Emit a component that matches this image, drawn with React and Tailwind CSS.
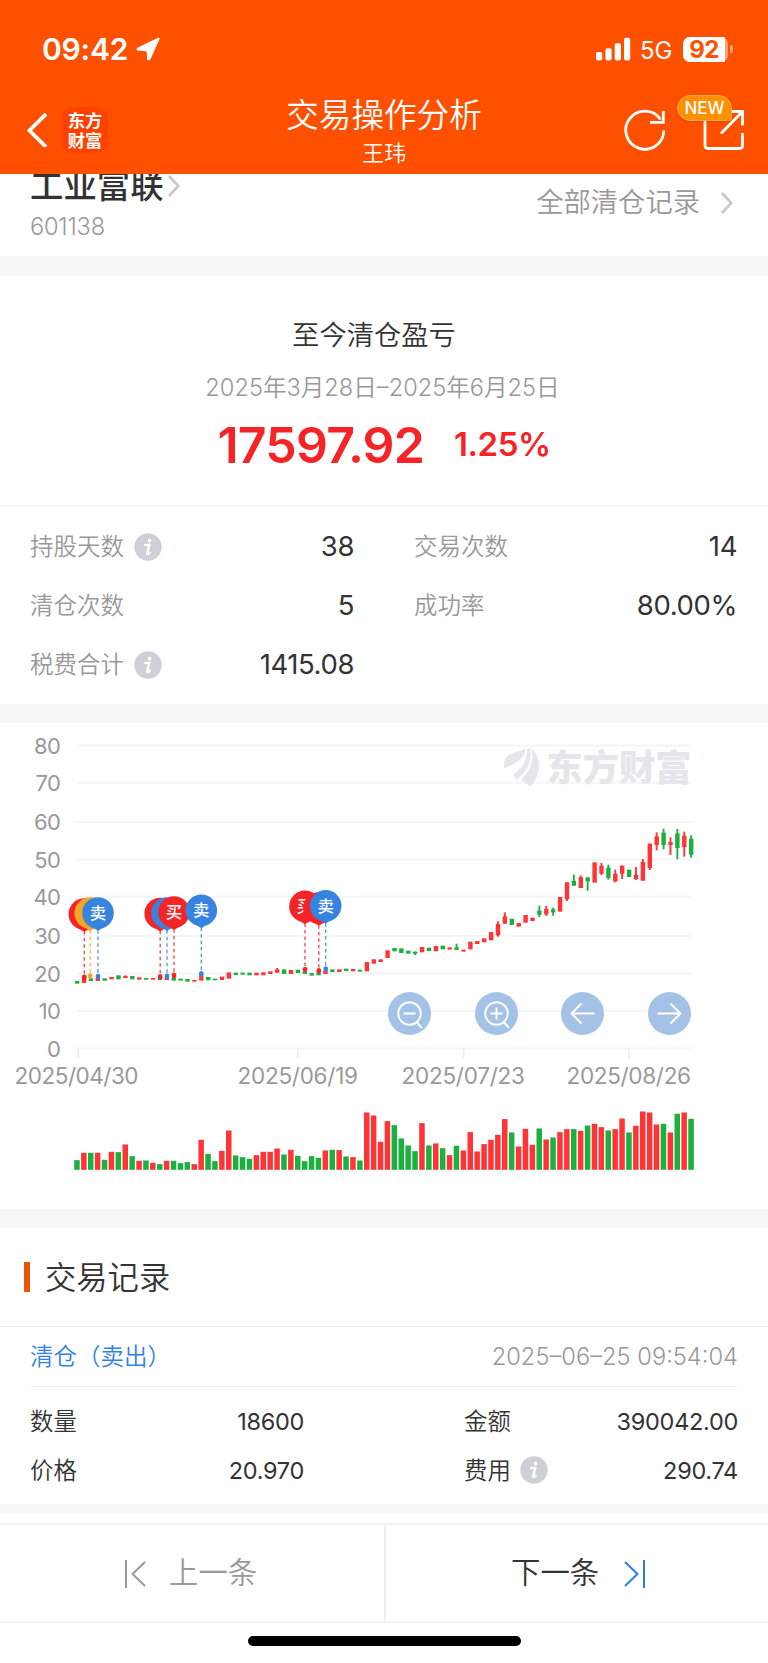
import React, { useState } from 'react';

const UP = '#ff3437';
const DOWN = '#1ab13f';

// [direction, body top, body bottom, wick top, wick bottom, volume]
const CANDLES = [
  ['d', 783, 791, 0, 0, 29], ['u', 767, 789, 0, 0, 51], ['d', 775, 783, 0, 0, 51], ['u', 774, 783, 0, 0, 51],
  ['d', 775, 782, 0, 0, 30], ['u', 771, 778, 0, 0, 54], ['d', 766, 778, 0, 0, 53], ['u', 768, 774, 766, 774, 76],
  ['d', 768, 778, 0, 0, 41], ['u', 772, 779, 0, 0, 27], ['d', 774, 779, 0, 0, 28], ['u', 774, 779, 0, 0, 21],
  ['d', 775, 780, 0, 0, 17], ['u', 774, 780, 0, 0, 27], ['d', 773, 782, 0, 0, 27], ['d', 776, 782, 0, 0, 20],
  ['d', 777, 785, 0, 0, 23], ['u', 780, 785, 0, 0, 17], ['u', 766, 782, 0, 0, 90], ['d', 771, 781, 0, 0, 48],
  ['d', 776, 781, 0, 0, 26], ['u', 770, 780, 0, 0, 57], ['u', 757, 776, 0, 0, 118], ['d', 758, 765, 0, 0, 43],
  ['d', 758, 764, 0, 0, 38], ['d', 758, 766, 0, 0, 33], ['u', 758, 766, 0, 0, 44], ['u', 757, 766, 0, 0, 54],
  ['u', 754, 762, 0, 0, 54], ['u', 748, 758, 744, 758, 64], ['d', 748, 762, 0, 0, 46], ['u', 750, 762, 0, 0, 60],
  ['d', 749, 759, 0, 0, 42], ['d', 755, 762, 0, 0, 26], ['d', 759, 767, 0, 0, 41], ['d', 758, 766, 0, 0, 36],
  ['u', 752, 762, 0, 0, 58], ['d', 748, 756, 0, 0, 60], ['u', 748, 756, 0, 0, 59], ['d', 746, 753, 0, 0, 40],
  ['u', 747, 754, 0, 0, 38], ['d', 749, 755, 0, 0, 28], ['u', 726, 754, 0, 0, 172], ['u', 718, 731, 0, 0, 163],
  ['u', 718, 726, 0, 0, 84], ['u', 691, 714, 0, 0, 146], ['d', 684, 694, 0, 0, 134], ['d', 685, 699, 0, 0, 94],
  ['d', 692, 701, 0, 0, 73], ['d', 695, 701, 695, 705, 56], ['u', 681, 697, 0, 0, 140], ['d', 683, 693, 0, 0, 73],
  ['u', 678, 694, 0, 0, 79], ['d', 677, 688, 0, 0, 65], ['u', 682, 689, 0, 0, 44], ['d', 682, 690, 671, 690, 72],
  ['u', 689, 695, 0, 0, 58], ['u', 665, 688, 0, 0, 113], ['u', 663, 672, 0, 0, 55], ['u', 655, 667, 0, 0, 77],
  ['u', 636, 661, 0, 0, 90], ['u', 612, 646, 604, 650, 105], ['u', 589, 611, 577, 611, 152], ['d', 596, 615, 0, 0, 112],
  ['u', 609, 620, 0, 0, 70], ['u', 585, 608, 0, 0, 123], ['u', 593, 603, 0, 0, 75], ['d', 572, 584, 557, 591, 124],
  ['u', 567, 583, 558, 588, 91], ['d', 568, 577, 563, 587, 97], ['u', 531, 575, 0, 0, 113], ['u', 487, 538, 487, 543, 122],
  ['d', 483, 497, 464, 497, 122], ['u', 472, 504, 466, 504, 117], ['d', 473, 484, 471, 512, 133], ['u', 427, 488, 0, 0, 138],
  ['u', 437, 461, 429, 465, 128], ['d', 443, 474, 434, 479, 118], ['u', 461, 484, 449, 487, 122], ['u', 437, 461, 437, 477, 154],
  ['d', 449, 471, 0, 0, 112], ['u', 464, 477, 441, 480, 132], ['u', 426, 482, 417, 482, 175], ['u', 371, 444, 371, 450, 172],
  ['u', 349, 375, 337, 391, 136], ['d', 338, 375, 326, 388, 138], ['u', 366, 375, 352, 405, 112], ['d', 340, 384, 327, 418, 168],
  ['u', 347, 381, 335, 410, 172], ['d', 356, 404, 346, 413, 153],
];

// pins without text are covered by the next one
const PINS = [
  { x: 84.3, y: 194.3, dot: 257.3, color: '#f62427' },
  { x: 90.2, y: 193.3, dot: 256, color: '#f5a623' },
  { x: 98, y: 193.2, dot: 256.5, color: '#3783e0', text: '卖' },
  { x: 160.2, y: 193.8, dot: 256.7, color: '#f62427' },
  { x: 167, y: 193.3, dot: 256.2, color: '#3783e0' },
  { x: 174, y: 192.3, dot: 255.4, color: '#f62427', text: '买' },
  { x: 201.3, y: 190.6, dot: 253.8, color: '#3783e0', text: '卖' },
  { x: 305, y: 186.6, dot: 249.5, color: '#f62427', text: '买' },
  { x: 318.8, y: 188.2, dot: 250.8, color: '#f62427' },
  { x: 325.7, y: 186, dot: 249, color: '#3783e0', text: '卖' },
];

const GRID = [
  [80, 25.5], [70, 62.7], [60, 102], [50, 139.5], [40, 176.7], [30, 216], [20, 253.5], [10, 291], [0, 328.5],
];

const DATES = [
  { tick: 78, start: 14.5, width: 124, label: '2025/04/30' },
  { tick: 298, start: 237.5, width: 120.5, label: '2025/06/19' },
  { tick: 463.7, start: 401.5, width: 123.5, label: '2025/07/23' },
  { tick: 629, start: 566.5, width: 124.5, label: '2025/08/26' },
];

const InfoIcon = () => (
  <svg className="w-7 h-7 shrink-0" viewBox="0 0 28 28">
    <circle cx="14" cy="14" r="13.7" fill="#cdd0d6" />
    <circle cx="15.6" cy="7.6" r="1.9" fill="#fff" />
    <path d="M11.2 12.2 15.4 11.6 13.1 20.4Q12.9 22 15.8 19.8" fill="none" stroke="#fff" strokeWidth="2.3" strokeLinejoin="round" strokeLinecap="round" />
  </svg>
);

const Chevron = ({ className }) => (
  <svg className={className} viewBox="0 0 12 22" fill="none" stroke="#c8c8c8" strokeWidth="2.6">
    <path d="M1 1 10.3 11 1 21" />
  </svg>
);

const StatusBar = () => (
  <div className="h-[92px] flex items-start justify-between pl-[42px] pr-9 pt-[34px]">
    <div className="flex items-center h-[30px]">
      <span className="text-[30px] leading-[30px] font-semibold tracking-[-0.2px]">09:42</span>
      <svg className="w-6 h-6 ml-2" viewBox="0 0 24 24" fill="#fff">
        <path d="M21.6 1Q24.2.2 23.300 2.800L14.400 22.200Q12.600 24.400 11 22.400L10.800 15.400Q10.800 14.200 9.600 14.200L1.600 13.600Q-.4 12.400 1.400 10.800Z" />
      </svg>
    </div>
    <div className="flex items-center h-[30px]">
      <svg className="w-[35px] h-6" viewBox="0 0 35 24" fill="#fff">
        <rect x="0" y="15" width="6.2" height="8.4" rx="1.8" />
        <rect x="9.4" y="11.2" width="6.2" height="12.2" rx="1.8" />
        <rect x="18.7" y="6.2" width="6.2" height="17.2" rx="1.8" />
        <rect x="28" y="0.8" width="6.2" height="22.6" rx="1.8" />
      </svg>
      <span className="ml-[9px] mt-[3px] text-[24px] leading-[30px] tracking-[-0.3px]">5G</span>
      <div className="ml-[11px] w-[45px] h-[25px] rounded-[7px] bg-[#ffa27a] flex items-center">
        <div className="w-[42px] h-[25px] rounded-l-[7px] bg-white text-[#ff5000] text-[24px] leading-[25px] font-bold text-center tracking-[-0.5px]">92</div>
      </div>
      <div className="w-[3px] h-2 ml-[2px] -mr-px rounded-r-full bg-[#ffa27a]" />
    </div>
  </div>
);

const NavBar = () => (
  <div className="h-[82px] flex justify-between">
    <div className="w-[200px] flex items-start pl-[27px] pt-[15px]">
      <svg className="w-5 h-[34px] mt-1.5" viewBox="0 0 20 34" fill="none" stroke="#fff" strokeWidth="3.8">
        <path d="M19 1 2.500 17.500 19 34" />
      </svg>
      <div className="ml-[15px] w-[46px] h-[46px] rounded-[10px] bg-[#ff4200] text-[17.3px] leading-[19.5px] font-bold text-center pt-[4px]">
        <div>东方</div>
        <div>财富</div>
      </div>
    </div>
    <div className="flex flex-col items-center">
      <h1 className="mt-[2px] text-[32.6px] leading-[42px] font-[350]">交易操作分析</h1>
      <p className="text-[22px] leading-8 mt-px font-[350]">王玮</p>
    </div>
    <div className="w-[200px] relative flex items-start pl-[56px] pt-[16px]">
      <svg className="w-[42px] h-[44px]" viewBox="0 0 42 44" fill="none" stroke="#fff" strokeWidth="2.8">
        <path d="M39.8 22.500A19 19 0 1 1 36.500 11.500" />
        <path d="M39.3 3V14.4H26" />
      </svg>
      <svg className="ml-[37px] w-[42px] h-[44px]" viewBox="0 0 42 44" fill="none" stroke="#fff" strokeWidth="2.8">
        <path d="M2 10V37.500Q2 40.500 5 40.500H36.500Q39.500 40.500 39.500 37.500V25" />
        <path d="M26 3.500H39.500V17.500M39 4 18 25.500" />
      </svg>
      <span className="absolute left-[109px] top-[3px] w-[55px] h-[26px] rounded-[13px] rounded-br-[3px] bg-[#ff9000] border border-[#ffa640] text-[17px] leading-[25px] font-medium text-center shadow-sm">NEW</span>
    </div>
  </div>
);

const Stat = ({ label, value, info }) => (
  <div className="flex items-center justify-between h-[59px]">
    <div className="flex items-center">
      <span className="text-[23.5px] text-[#999] font-[350]">{label}</span>
      {info && <span className="ml-[10px]"><InfoIcon /></span>}
    </div>
    <span className="-mr-px text-[27.5px] tracking-[-0.4px] text-[#333] font-[370]">{value}</span>
  </div>
);

const TradeField = ({ label, value, info }) => (
  <div className="flex items-center justify-between h-[49px]">
    <div className="flex items-center">
      <span className="text-[23.4px] font-[350]">{label}</span>
      {info && <span className="ml-[9px]"><InfoIcon /></span>}
    </div>
    <span className="text-[23.5px] tracking-[-0.3px] font-[370]">{value}</span>
  </div>
);

const TradeChart = () => (
  <svg className="block w-[768px] h-[480px]" viewBox="0 0 768 480">
    {GRID.map(([label, y]) => (
      <g key={label}>
        <path d={`M77 ${y}H691`} stroke="#f5f5f5" strokeWidth="2" />
        <text x="60" y={y + 8.3} textAnchor="end" fontSize="22" fontWeight="370" fill="#999" letterSpacing="-0.8">{label}</text>
      </g>
    ))}
    {DATES.map((d) => (
      <g key={d.label}>
        <path d={`M${d.tick} 328V338`} stroke="#eee" strokeWidth="1.6" />
        <text x={d.start} y="364" fontSize="22.5" fontWeight="370" fill="#999" textLength={d.width}>{d.label}</text>
      </g>
    ))}

    {/* watermark */}
    <g fill="#e6e6ea">
      <path d="M504 43C505 33 518 32 526 28.500C524 38 518 43 504 48Z" />
      <path d="M513.500 54.500C526 45 526 38 527.500 28.500L530.500 28.500C532 42 526 54 516 59.500Z" />
      <path d="M521 60C532 48 534 40 531.500 28.500C541 36 542 55 530.500 66.500Z" />
      <text x="546.5" y="60.500" fontSize="36.3" fontWeight="900" textLength="145">东方财富</text>
    </g>

    {CANDLES.map(([dir, top, bottom, wickTop, wickBottom, volume], i) => {
      const x = 77 + i * 6.9;
      const color = dir === 'u' ? UP : DOWN;
      return (
        <g key={i} fill={color}>
          <rect x={x - 2.1} y={top / 3} width="4.4" height={(bottom - top) / 3} />
          {wickTop > 0 && <rect x={x - 0.9} y={wickTop / 3} width="1.9" height={(wickBottom - wickTop) / 3} />}
          <rect x={x - 2.8} y={449.8 - volume / 3} width="5.5" height={volume / 3} />
        </g>
      );
    })}

    {PINS.map((p, i) => (
      <g key={i}>
        <path d={`M${p.x} ${p.y + 17}V${p.dot}`} stroke={p.color} strokeWidth="1.3" strokeDasharray="3.5 3" opacity="0.85" />
        <ellipse cx={p.x} cy={p.dot} rx="2.3" ry="2.8" fill={p.color} />
      </g>
    ))}
    {PINS.map((p, i) => (
      <g key={i}>
        <circle cx={p.x} cy={p.y - 0.2} r="15.8" fill={p.color} />
        <path d={`M${p.x - 11.5} ${p.y + 10.5}L${p.x} ${p.y + 17.6}L${p.x + 11.5} ${p.y + 10.5}Z`} fill={p.color} />
        {p.text && (
          <text x={p.x} y={p.y + 5.8} textAnchor="middle" fontSize="16.4" fontWeight="500" fill="#fff">{p.text}</text>
        )}
      </g>
    ))}
  </svg>
);

const ChartButton = ({ onClick, children }) => (
  <button type="button" onClick={onClick} className="w-[43px] h-[43px] rounded-full bg-[#9fbfe5]/95">
    <svg className="w-[43px] h-[43px]" viewBox="0 0 43 43" fill="none" stroke="#fff" strokeWidth="2">
      {children}
    </svg>
  </button>
);

const App = () => {
  const [, setZoom] = useState(1);
  const [, setOffset] = useState(0);

  return (
    <div
      className="w-[768px] h-[1663px] overflow-hidden bg-white text-[#333] flex flex-col font-['Inter','Noto_Sans_CJK_SC',sans-serif]"
      lang="zh-CN"
    >
      <header className="h-[174px] shrink-0 bg-[#ff5000] text-white relative z-10">
        <StatusBar />
        <NavBar />
      </header>

      <section className="h-[82px] shrink-0 flex justify-between pl-[30px] pr-[35px]">
        <div className="-mt-[9px]">
          <div className="flex items-center h-[42px]">
            <span className="text-[33.4px] leading-[42px] font-medium">工业富联</span>
            <Chevron className="w-3 h-[22px] ml-[4px]" />
          </div>
          <div className="text-[23.6px] leading-8 mt-[4px] text-[#999] font-[350] tracking-[-0.2px]">601138</div>
        </div>
        <div className="flex items-center h-10 mt-[9px]">
          <span className="text-[27.3px] text-[#999] font-[350]">全部清仓记录</span>
          <Chevron className="w-3 h-[22px] ml-[21px]" />
        </div>
      </section>
      <div className="h-5 shrink-0 bg-[#f7f7f7]" />

      <section className="h-[231px] shrink-0 flex flex-col items-center border-b-2 border-[#f7f7f7]">
        <h2 className="mt-[40px] mr-5 text-[27.3px] leading-10 font-[350]">至今清仓盈亏</h2>
        <p className="mt-[15px] mr-[3px] text-[23.6px] leading-[34px] text-[#999] font-[350]">2025年3月28日–2025年6月25日</p>
        <div className="mt-[10px] flex items-center h-[60px] text-[#f62427] font-semibold">
          <span className="text-[50px] tracking-[-0.8px]">17597.92</span>
          <span className="ml-[30px] text-[33px] tracking-[-0.5px]">1.25%</span>
        </div>
      </section>

      <section className="h-[197px] shrink-0 grid grid-cols-[323px_322px] gap-x-[61px] content-start pl-[30px] pt-[10px]">
        <Stat label="持股天数" value="38" info />
        <Stat label="交易次数" value="14" />
        <Stat label="清仓次数" value="5" />
        <Stat label="成功率" value="80.00%" />
        <Stat label="税费合计" value="1415.08" info />
      </section>
      <div className="h-[19px] shrink-0 bg-[#f7f7f7]" />

      <section className="h-[486px] shrink-0 relative">
        <div className="-mt-[3px]">
          <TradeChart />
        </div>
        <div className="absolute left-[388px] top-[269px] w-[303px] flex justify-between">
          <ChartButton onClick={() => setZoom((z) => z / 2)}>
            <circle cx="21.5" cy="21.5" r="11.2" />
            <path d="M15.5 21.5H27.5M28.5 30 34 36" />
          </ChartButton>
          <ChartButton onClick={() => setZoom((z) => z * 2)}>
            <circle cx="21.5" cy="21.5" r="11.2" />
            <path d="M15.5 21.5H27.5M21.5 15.5V27.5M28.5 30 34 36" />
          </ChartButton>
          <ChartButton onClick={() => setOffset((o) => o - 1)}>
            <path d="M33.5 21.5H10.5M20.5 11.5 10.5 21.5 20.5 31.5" />
          </ChartButton>
          <ChartButton onClick={() => setOffset((o) => o + 1)}>
            <path d="M9.5 21.5H32.5M22.5 11.5 32.5 21.5 22.5 31.5" />
          </ChartButton>
        </div>
      </section>
      <div className="h-[19px] shrink-0 bg-[#f7f7f7]" />

      <section className="h-[276px] shrink-0">
        <div className="h-[99px] flex items-center pl-[23.5px] border-b border-[#efefef]">
          <span className="w-[6.5px] h-[30px] bg-[#ea5504]" />
          <h3 className="ml-[15px] mt-px text-[31.3px] leading-10 font-[350]">交易记录</h3>
        </div>
        <div className="mx-[30px] h-[60px] flex items-center justify-between border-b border-[#efefef]">
          <span className="mt-px text-[23.5px] text-[#3181e8] font-[350]">清仓（卖出）</span>
          <span className="mt-px text-[23.7px] text-[#999] font-[350]">2025–06–25 09:54:04</span>
        </div>
        <div className="mx-[30px] pt-[10px] grid grid-cols-[274px_274px] justify-between">
          <TradeField label="数量" value="18600" />
          <TradeField label="金额" value="390042.00" />
          <TradeField label="价格" value="20.970" />
          <TradeField label="费用" value="290.74" info />
        </div>
      </section>
      <div className="h-[10px] shrink-0 bg-[#f7f7f7]" />

      <footer className="mt-[9px] shrink-0">
        <div className="h-[100px] grid grid-cols-2 border-y-2 border-[#f2f2f2] text-[29.4px] font-[350]">
          <button type="button" className="flex items-center pl-[124px] pt-px text-[#999]">
            <svg className="w-[22px] h-7" viewBox="0 0 22 28" fill="none" stroke="#999" strokeWidth="2">
              <path d="M2 0V28M21 2 8.5 14 21 26" />
            </svg>
            <span className="ml-[23px]">上一条</span>
          </button>
          <button type="button" className="flex items-center pl-[125px] pt-px border-l-2 border-[#eee]">
            <span>下一条</span>
            <svg className="w-[22px] h-7 ml-[25px]" viewBox="0 0 22 28" fill="none" stroke="#2b7de9" strokeWidth="2">
              <path d="M20 0V28M1 2 13.5 14 1 26" />
            </svg>
          </button>
        </div>
        <div className="mt-[13px] mx-auto w-[273px] h-[10px] rounded-full bg-black" />
      </footer>
    </div>
  );
};

export default App;
